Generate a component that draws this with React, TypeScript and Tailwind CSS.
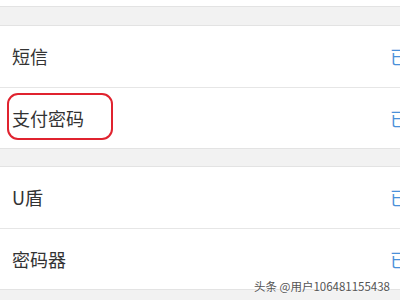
const rows1 = ["短信", "支付密码"];
const rows2 = ["U盾", "密码器"];

function Row({ label, last, circled }: { label: string; last?: boolean; circled?: boolean }) {
  return (
    <div className={`relative flex items-center bg-white pl-3 ${last ? "h-[60px]" : "h-[62px] border-b border-[#e6e6e6]"}`}>
      <span className="flex-1 text-[18px] text-[#333333]">{label}</span>
      <span className="w-[10px] shrink-0 whitespace-nowrap text-[18px] text-[#4a90d9]">已开通</span>
      {circled && (
        <div className="absolute left-[7px] top-[5px] h-[47px] w-[106px] rounded-[11px] border-[2.5px] border-[#e0232f]" />
      )}
    </div>
  );
}

export default function App() {
  return (
    <div
      className="relative h-[300px] w-[400px] overflow-hidden bg-[#f2f2f2]"
      style={{ fontFamily: "'Noto Sans CJK SC', 'Noto Sans', sans-serif" }}
    >
      <div className="h-[7px] border-b border-[#e3e3e3] bg-white" />
      <div className="h-[19px] border-b border-[#e3e3e3]" />
      {rows1.map((r, i) => (
        <Row key={r} label={r} last={i === rows1.length - 1} circled={r === "支付密码"} />
      ))}
      <div className="h-[19px] border-y border-[#e3e3e3]" />
      {rows2.map((r, i) => (
        <Row key={r} label={r} last={i === rows2.length - 1} />
      ))}
      <div className="border-t border-[#e3e3e3]" />
      <div
        className="absolute right-[10px] top-[278px] whitespace-nowrap text-[11.5px] text-[#555555]"
        style={{ textShadow: "0 0 2px #fff, 0 0 2px #fff" }}
      >
        头条 @用户106481155438
      </div>
    </div>
  );
}
